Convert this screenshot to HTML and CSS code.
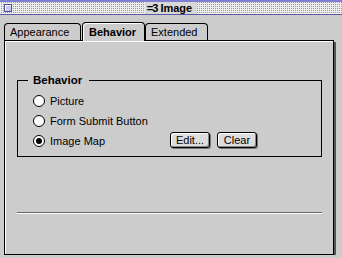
FILE: index.html
```html
<!DOCTYPE html>
<html lang="en">
<head>
  <meta charset="UTF-8">
  <title>Image</title>
  <link rel="stylesheet" href="styles.css">
</head>
<body>
  <div class="titlebar">
    <span class="close"></span>
    <span class="title"><span class="title-icon">=3</span> Image</span>
  </div>

  <div class="content">
    <div class="tabs">
      <div class="tab tab-wide">Appearance</div>
      <div class="tab active">Behavior</div>
      <div class="tab">Extended</div>
    </div>

    <div class="panel">
      <fieldset class="group">
        <legend>Behavior</legend>
        <div class="option"><span class="radio"></span>Picture</div>
        <div class="option"><span class="radio"></span>Form Submit Button</div>
        <div class="option">
          <span class="radio on"></span>
          <span class="label-fixed">Image Map</span>
          <button class="btn">Edit...</button>
          <button class="btn">Clear</button>
        </div>
      </fieldset>
      <div class="rule"></div>
    </div>
  </div>
</body>
</html>
```

FILE: styles.css
```css
body {
  margin: 0;
  background: #cccccc;
  font-family: "Liberation Sans", Arial, sans-serif;
  font-size: 11px;
  color: #000;
}

/* window title bar */
.titlebar {
  height: 12px;
  border-top: 2px solid #7f7fd6;
  border-bottom: 1px solid #5a5aa8;
  background: #eeeeee conic-gradient(#9a9a9a 25%, transparent 0) 0 0 / 2px 2px;
  position: relative;
  display: flex;
  justify-content: center;
}
.close {
  position: absolute;
  left: 4px;
  top: 2px;
  width: 6px;
  height: 6px;
  border: 1px solid #4b4b9a;
  background: #c8c8e8;
  box-shadow: inset 1px 1px 0 #fff;
}
.title {
  background: #d8d8d8;
  padding: 0 5px 0 2px;
  font-weight: bold;
  font-size: 11px;
  line-height: 12px;
}
.title-icon {
  letter-spacing: -1px;
}

.content {
  padding: 7px 0 0 4px;
}

/* tabs */
.tabs {
  display: flex;
  align-items: flex-end;
  height: 18px;
}
.tab {
  box-sizing: border-box;
  width: 63px;
  height: 17px;
  padding-left: 5px;
  border: 1px solid #000;
  border-bottom: none;
  border-radius: 4px 4px 0 0;
  line-height: 16px;
  background: #cccccc;
}
.tab-wide {
  width: 77px;
  margin-right: 1px;
}
.tab.active {
  height: 19px;
  margin-bottom: -1px;
  font-weight: bold;
  padding-left: 6px;
  box-shadow: inset 1px 1px 0 #fff;
  position: relative;
  z-index: 1;
  line-height: 18px;
}

/* panel */
.panel {
  box-sizing: border-box;
  width: 330px;
  height: 215px;
  border: 1px solid #000;
  box-shadow: inset 1px 1px 0 #fff, 2px 2px 0 #555;
  padding: 33px 0 0 12px;
}

.group {
  box-sizing: border-box;
  width: 305px;
  margin: 0;
  border: 1px solid #000;
  padding: 5px 0 5px 15px;
}
.group legend {
  font-weight: bold;
  font-size: 11.5px;
  padding: 0 7px 0 5px;
  margin-left: -5px;
}

.option {
  display: flex;
  align-items: center;
  height: 20px;
}
.radio {
  box-sizing: border-box;
  width: 12px;
  height: 12px;
  border: 1px solid #000;
  border-radius: 50%;
  background: #fff;
  margin-right: 5px;
  display: flex;
  align-items: center;
  justify-content: center;
}
.radio.on::after {
  content: "";
  width: 6px;
  height: 6px;
  border-radius: 50%;
  background: #000;
}
.label-fixed {
  width: 120px;
}

.btn {
  box-sizing: border-box;
  width: 40px;
  height: 16px;
  margin: -3px 7px 0 0;
  padding: 0;
  border: 1px solid #000;
  border-radius: 3px;
  background: #dddddd;
  box-shadow: inset 1px 1px 0 #fff, inset -1px -1px 0 #888, 1px 1px 0 #777;
  font-family: inherit;
  font-size: 11px;
  color: #000;
}

.rule {
  width: 305px;
  margin-top: 55px;
  border-top: 1px solid #666;
  border-bottom: 1px solid #fff;
}
```
